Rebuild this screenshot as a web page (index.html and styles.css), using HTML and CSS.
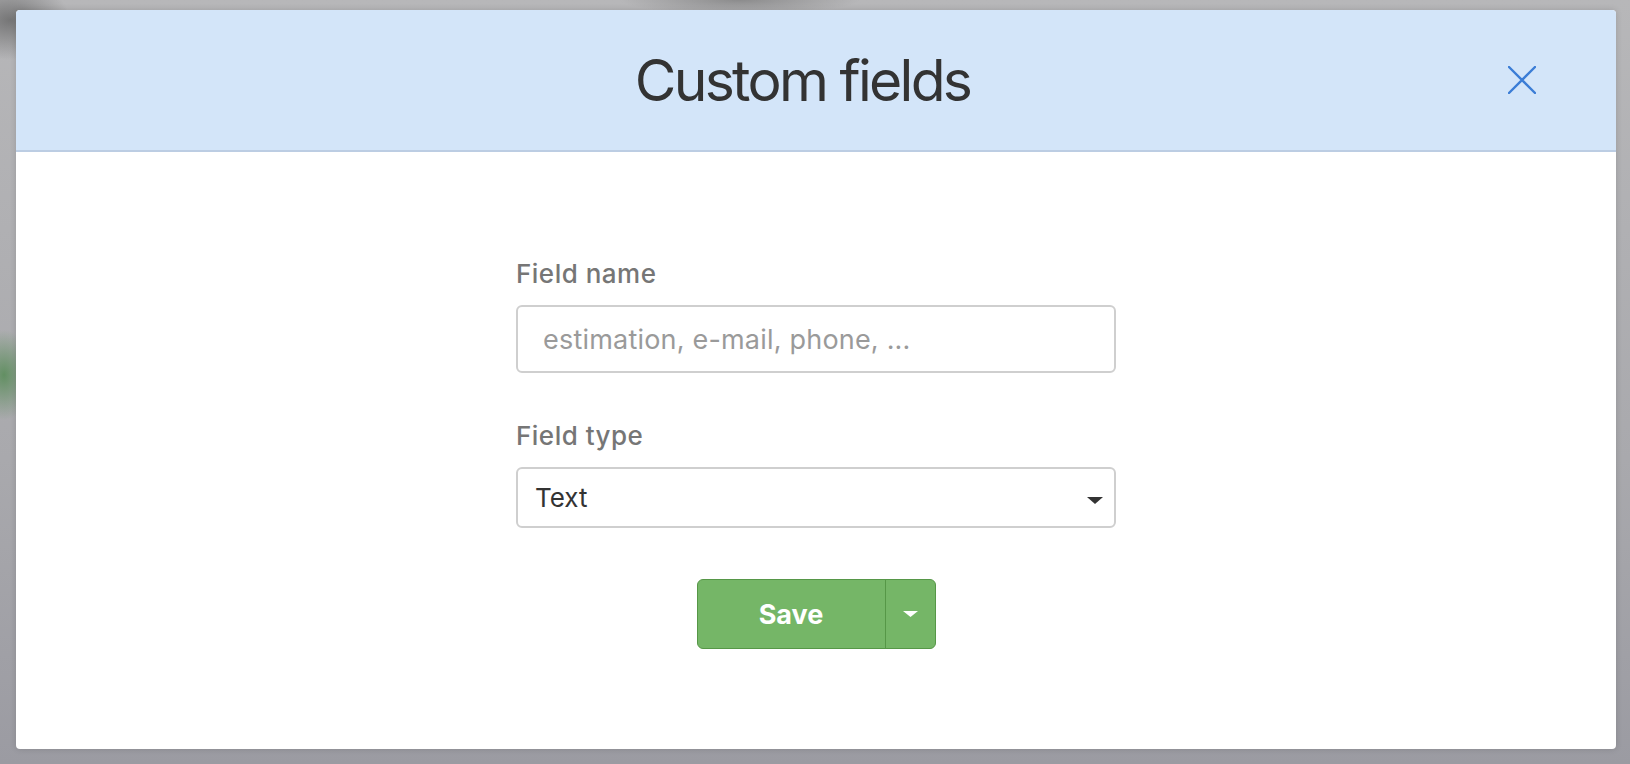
FILE: index.html
```html
<!DOCTYPE html>
<html lang="en">
	<head>
		<meta charset="UTF-8" />
		<meta name="viewport" content="width=device-width, initial-scale=1.0" />
		<title>Custom fields</title>
		<link rel="stylesheet" href="styles.css">
	</head>
	<body>
		<div class="modal">
			<div class="modal-header">
				<h1 class="modal-title">Custom fields</h1>
				<button class="close" type="button" aria-label="Close">
					<svg width="28" height="28" viewBox="0 0 28 28">
						<path d="M1 1 L27 27 M27 1 L1 27" stroke="#3b7dd6" stroke-width="2.4" stroke-linecap="round" fill="none" />
					</svg>
				</button>
			</div>
			<form class="modal-body">
				<div class="field">
					<label for="fieldName">Field name</label>
					<input id="fieldName" class="control" type="text" placeholder="estimation, e-mail, phone, ..." />
				</div>
				<div class="field">
					<label for="fieldType">Field type</label>
					<div class="select-wrap">
						<select id="fieldType" class="control select">
							<option>Text</option>
							<option>Number</option>
							<option>Date</option>
						</select>
						<svg class="select-caret" width="16" height="7" viewBox="0 0 16 7">
							<path d="M0 0 H16 L8 7 Z" fill="#333" />
						</svg>
					</div>
				</div>
				<div class="btn-group">
					<button class="btn-save" type="submit">Save</button>
					<button class="btn-toggle" type="button" aria-label="More">
						<svg width="15" height="6" viewBox="0 0 15 6">
							<path d="M0 0 H15 L7.5 6 Z" fill="#fff" />
						</svg>
					</button>
				</div>
			</form>
		</div>
	</body>
</html>
```

FILE: styles.css
```css
body {
	margin: 0;
	height: 764px;
	box-sizing: border-box;
	padding: 10px 14px 15px 16px;
	font-family: Inter, "Liberation Sans", sans-serif;
	background:
		radial-gradient(ellipse 30px 45px at 4px 375px, rgba(90, 140, 90, 0.9), rgba(90, 140, 90, 0) 100%),
		radial-gradient(ellipse 60px 40px at 10px 20px, rgba(90, 90, 90, 0.7), rgba(90, 90, 90, 0) 100%),
		radial-gradient(ellipse 120px 14px at 740px 0, rgba(110, 110, 110, 0.6), rgba(110, 110, 110, 0) 100%),
		linear-gradient(180deg, #b7b7b9 0%, #a9a9ad 60%, #9b9ba2 100%);
	overflow: hidden;
}
.modal {
	box-sizing: border-box;
	width: 1600px;
	height: 739px;
	background-color: #fff;
	border-radius: 4px;
	overflow: hidden;
	box-shadow: 0 0 6px rgba(0, 0, 0, 0.15);
}
.modal-header {
	height: 142px;
	box-sizing: border-box;
	display: flex;
	align-items: center;
	padding: 0 80px 0 81px;
	background-color: #d3e5f9;
	border-bottom: 2px solid #bccde3;
}
.modal-title {
	flex: 1;
	margin: 0;
	text-align: center;
	font-size: 57px;
	font-weight: 400;
	letter-spacing: -2.7px;
	color: #333;
	line-height: 1;
}
.close {
	display: flex;
	width: 28px;
	height: 28px;
	padding: 0;
	border: 0;
	background: none;
	cursor: pointer;
}
.modal-body {
	display: flex;
	flex-direction: column;
	align-items: center;
	padding-top: 107px;
}
.field {
	display: flex;
	flex-direction: column;
	width: 600px;
	margin-bottom: 48px;
}
.field label {
	font-size: 26px;
	line-height: 30px;
	font-weight: 500;
	letter-spacing: 0.5px;
	color: #767676;
	margin-bottom: 16px;
}
.control {
	box-sizing: border-box;
	width: 100%;
	height: 68px;
	padding: 0 25px;
	border: 2px solid #cfcfcf;
	border-radius: 6px;
	font-family: inherit;
	font-size: 27px;
	letter-spacing: 0.2px;
	color: #333;
	background-color: #fff;
	outline: none;
}
.control::placeholder {
	color: #9a9a9a;
}
.select-wrap {
	position: relative;
}
.select {
	height: 61px;
	padding: 0 40px 0 17px;
	font-size: 26px;
	letter-spacing: 0;
	appearance: none;
	-webkit-appearance: none;
}
.select-caret {
	position: absolute;
	right: 13px;
	top: 30px;
	pointer-events: none;
}
.field:nth-child(2) {
	margin-bottom: 51px;
}
.btn-group {
	display: flex;
	height: 70px;
	box-sizing: border-box;
	border: 1px solid #569747;
	border-radius: 6px;
	overflow: hidden;
	background-color: #75b667;
}
.btn-group button {
	border: 0;
	background: none;
	color: #fff;
	cursor: pointer;
	font-family: inherit;
}
.btn-save {
	width: 188px;
	font-size: 27px;
	font-weight: 700;
	border-right: 1px solid #569747 !important;
}
.btn-toggle {
	width: 49px;
	display: flex;
	align-items: center;
	justify-content: center;
	padding: 0;
}
```
